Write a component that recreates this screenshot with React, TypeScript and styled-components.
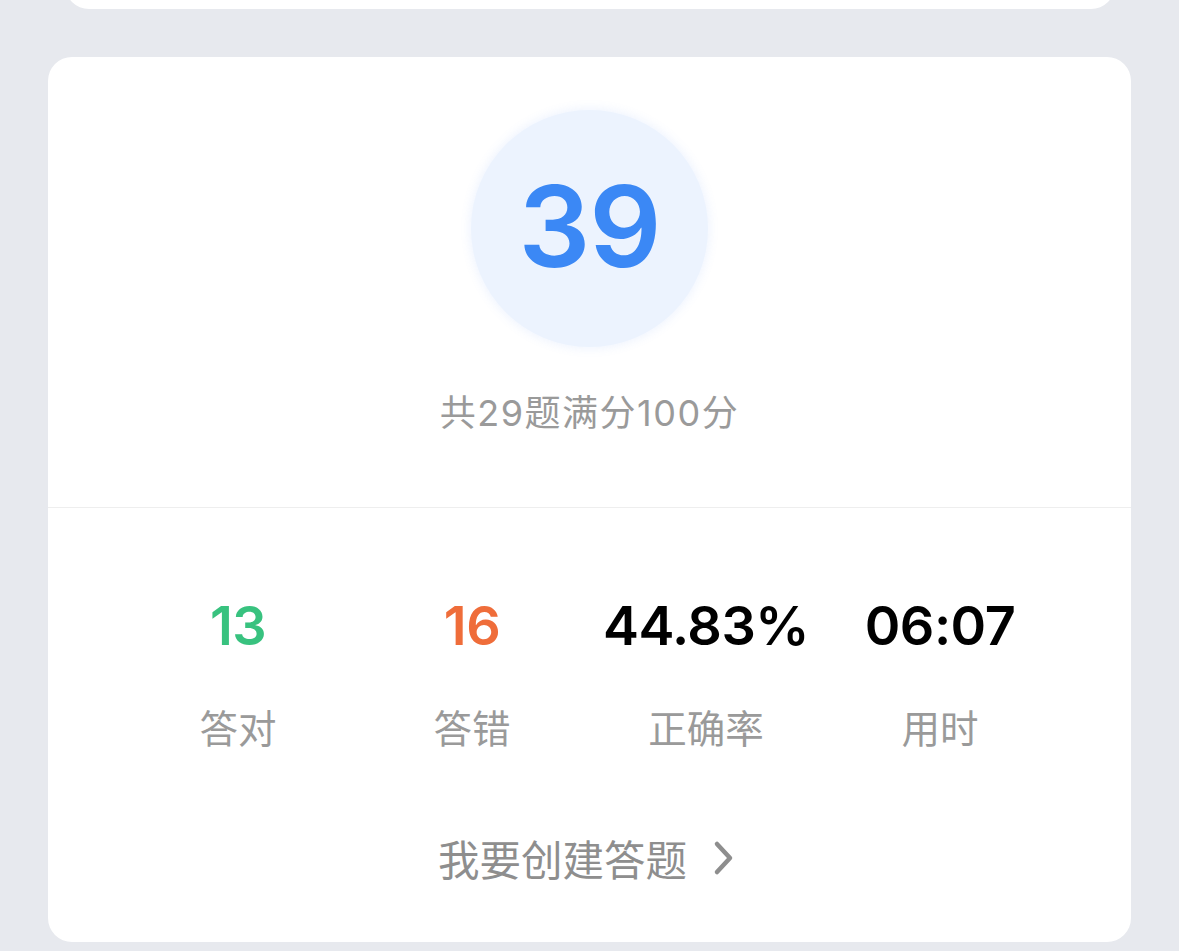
import React, { FC } from 'react';
import styled, { createGlobalStyle } from 'styled-components';

const GlobalStyle = createGlobalStyle`
  html, body {
    margin: 0;
    padding: 0;
    background: #e7e9ee;
  }
  body {
    font-family: Inter, "Noto Sans CJK SC", sans-serif;
    overflow: hidden;
  }
`;

const SPage = styled.div`
  width: 1179px;
  height: 951px;
  background: #e7e9ee;
  display: flex;
  flex-direction: column;
  align-items: center;
  gap: 48px;
  overflow: hidden;
`;

const SPrevCard = styled.div`
  width: 1050px;
  height: 60px;
  margin-top: -51px;
  background: #ffffff;
  border-radius: 24px;
  flex-shrink: 0;
`;

const SResultCard = styled.div`
  width: 1083px;
  height: 885px;
  background: #ffffff;
  border-radius: 24px;
  display: flex;
  flex-direction: column;
  flex-shrink: 0;
`;

const SScoreSection = styled.div`
  display: flex;
  flex-direction: column;
  align-items: center;
  padding-top: 53px;
  height: 451px;
  box-sizing: border-box;
  border-bottom: 1.5px solid #eeeeee;
`;

const SScoreCircle = styled.div`
  width: 237px;
  height: 237px;
  border-radius: 50%;
  background: #ecf3fe;
  box-shadow: 0 0 10px 2px rgba(96, 150, 245, 0.1);
  display: flex;
  align-items: center;
  justify-content: center;
`;

const SScore = styled.span`
  font-family: Inter, sans-serif;
  font-size: 113px;
  font-weight: 600;
  color: #3b88f5;
  letter-spacing: -1px;
  line-height: 1;
  margin-top: -4px;
`;

const SScoreCaption = styled.div`
  margin-top: 46px;
  font-family: Inter, "Noto Sans CJK SC", sans-serif;
  font-size: 36px;
  color: #9a9a9a;
  line-height: 40px;
  letter-spacing: 1.5px;
`;

const SStatsRow = styled.div`
  display: grid;
  grid-template-columns: repeat(4, 234px);
  padding: 0 73px;
  margin-top: 88px;
`;

const SStatItem = styled.div`
  display: flex;
  flex-direction: column;
  align-items: center;
`;

const SStatValue = styled.span<{ color: string }>`
  font-family: Inter, sans-serif;
  font-size: 54px;
  font-weight: 600;
  line-height: 60px;
  color: ${({ color }) => color};
  letter-spacing: -0.5px;
`;

const SStatLabel = styled.span`
  margin-top: 46px;
  font-family: "Noto Sans CJK SC", sans-serif;
  font-size: 38.5px;
  line-height: 48px;
  color: #9a9a9a;
`;

const SCreateLink = styled.div`
  margin-top: 84px;
  display: flex;
  align-items: center;
  justify-content: center;
  gap: 26px;
  font-family: "Noto Sans CJK SC", sans-serif;
  font-size: 41.5px;
  line-height: 48px;
  color: #8e8e8e;
  padding-right: 6px;
`;

const SChevron = styled.svg`
  width: 22px;
  height: 36px;
`;

const stats = [
  { value: '13', label: '答对', color: '#38c27f' },
  { value: '16', label: '答错', color: '#ef6d3a' },
  { value: '44.83%', label: '正确率', color: '#000000' },
  { value: '06:07', label: '用时', color: '#000000' },
];

const App: FC = () => {
  return (
    <>
      <GlobalStyle />
      <SPage>
        <SPrevCard />
        <SResultCard>
          <SScoreSection>
            <SScoreCircle>
              <SScore>39</SScore>
            </SScoreCircle>
            <SScoreCaption>共29题满分100分</SScoreCaption>
          </SScoreSection>
          <SStatsRow>
            {stats.map((s) => (
              <SStatItem key={s.label}>
                <SStatValue color={s.color}>{s.value}</SStatValue>
                <SStatLabel>{s.label}</SStatLabel>
              </SStatItem>
            ))}
          </SStatsRow>
          <SCreateLink>
            我要创建答题
            <SChevron viewBox="0 0 22 36">
              <path d="M4 4 L17 18 L4 32" fill="none" stroke="#8e8e8e" strokeWidth="4.5" strokeLinecap="round" strokeLinejoin="round" />
            </SChevron>
          </SCreateLink>
        </SResultCard>
      </SPage>
    </>
  );
};

export default App;
